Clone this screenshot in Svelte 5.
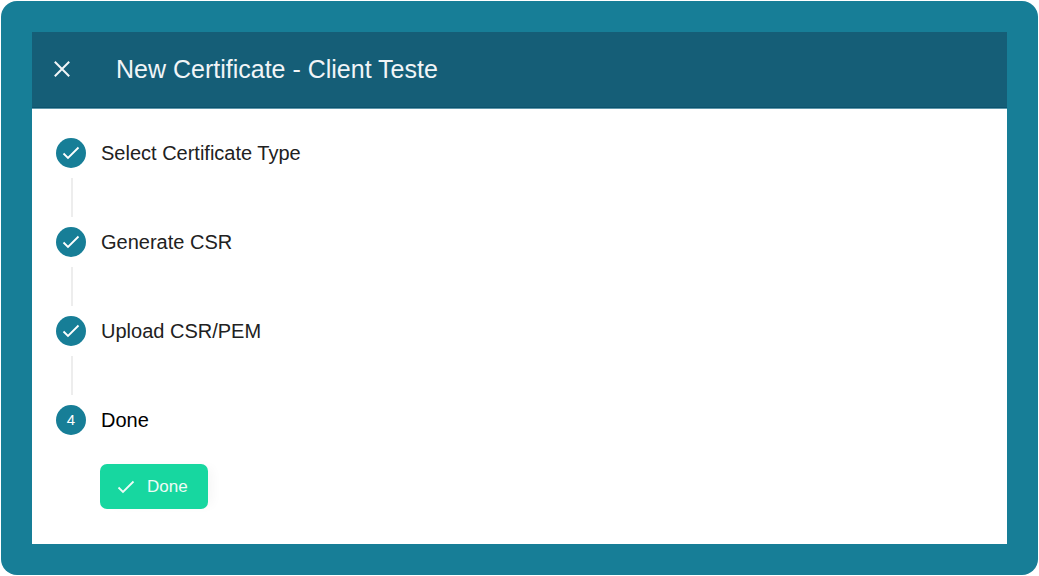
<script>
  const steps = [
    { label: 'Select Certificate Type', done: true },
    { label: 'Generate CSR', done: true },
    { label: 'Upload CSR/PEM', done: true },
    { label: 'Done', done: false }
  ];
</script>

{#snippet check()}
  <svg class="check" width="18" height="14" viewBox="0 0 18 14" aria-hidden="true">
    <path d="M1.5 7.5 6 12 16.5 1.5" />
  </svg>
{/snippet}

<div class="frame">
  <main class="dialog">
    <header>
      <button class="close" type="button" aria-label="Close">
        <svg width="16" height="16" viewBox="0 0 16 16" aria-hidden="true">
          <path d="M.8.8 15.2 15.2M15.2.8.8 15.2" />
        </svg>
      </button>
      <h1>New Certificate - Client Teste</h1>
    </header>

    <ol class="steps">
      {#each steps as step, i}
        <li aria-current={step.done ? undefined : 'step'}>
          <div class="step">
            <span class="dot">
              {#if step.done}{@render check()}{:else}{i + 1}{/if}
            </span>
            <span class="label" class:active={!step.done}>{step.label}</span>
          </div>
          {#if i < steps.length - 1}
            <div class="line"></div>
          {:else}
            <button class="finish" type="button">
              {@render check()}
              <span>Done</span>
            </button>
          {/if}
        </li>
      {/each}
    </ol>
  </main>
</div>

<style>
  :global(body) {
    margin: 0;
    background: #fff;
  }

  .frame {
    box-sizing: border-box;
    display: flex;
    min-height: calc(100vh - 2px);
    margin: 1px;
    padding: 31px;
    border-radius: 16px;
    background: #177e97;
    font-family: 'Liberation Sans', Arial, sans-serif;
  }

  .dialog {
    flex: 1;
    min-width: 0;
    background: #fff;
  }

  header {
    display: flex;
    align-items: center;
    gap: 40px;
    padding: 21px 16px 22px;
    border-bottom: 1px solid #0b536e;
    background: #155e77;
    box-shadow: 0 1px 0 #5f97aa;
    color: #f1f5f7;
  }

  h1 {
    margin: 0;
    font-size: 25px;
    font-weight: 400;
    line-height: 32px;
  }

  button {
    border: 0;
    font-family: inherit;
    cursor: pointer;
  }

  .close {
    display: grid;
    place-items: center;
    width: 28px;
    height: 28px;
    padding: 0;
    background: none;
    color: inherit;
  }

  .close path {
    fill: none;
    stroke: currentColor;
    stroke-width: 2;
  }

  .steps {
    margin: 0;
    padding: 30px 24px;
    list-style: none;
  }

  .step {
    display: flex;
    align-items: center;
    gap: 15px;
  }

  .dot {
    display: grid;
    place-items: center;
    flex: none;
    width: 30px;
    height: 30px;
    border-radius: 50%;
    background: #177e97;
    color: #fff;
    font-size: 15px;
    line-height: 20px;
  }

  .check {
    display: block;
    fill: none;
    stroke: currentColor;
    stroke-width: 1.8;
  }

  .label {
    color: #212121;
    font-size: 20px;
    line-height: 24px;
  }

  .active {
    color: #000;
  }

  .line {
    width: 2px;
    height: 39px;
    margin: 10px 15px;
    background: #ededed;
  }

  .finish {
    display: flex;
    align-items: center;
    gap: 12px;
    margin: 29px 0 0 44px;
    padding: 12px 20px 12px 17px;
    border-radius: 7px;
    background: #17d7a0;
    box-shadow: 8px 0 12px -4px rgb(0 0 0 / 4%);
    color: #eefcf7;
    font-size: 17px;
    line-height: 21px;
  }
</style>
